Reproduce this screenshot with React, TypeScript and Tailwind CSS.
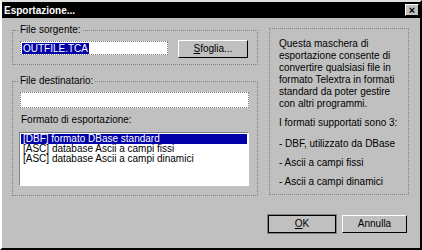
import React from "react";

const font = { fontFamily: '"Liberation Sans", Arial, sans-serif' };

function Group({ label, className, children }: { label?: string; className: string; children?: React.ReactNode }) {
  return (
    <div className={"relative border border-dotted border-[#808080] " + className}>
      {label && (
        <span className="absolute -top-[7px] left-[5px] bg-[#c0c0c0] px-[2px] leading-[12px]">{label}</span>
      )}
      {children}
    </div>
  );
}

export default function App() {
  return (
    <div className="w-[422px] h-[250px] bg-[#c0c0c0] text-[10px] text-black relative overflow-hidden border-l-2 border-t-2 border-l-white border-t-[#dfdfdf] border-b-2 border-b-black border-r-2 border-r-black" style={font}>
      <div className="h-[16px] bg-black flex items-center justify-between pl-[2px] pr-[1px]">
        <span className="text-white font-bold text-[10px]">Esportazione...</span>
        <div className="w-[14px] h-[12px] bg-[#c0c0c0] border border-t-white border-l-white border-r-black border-b-black flex items-center justify-center text-[11px] font-bold leading-none">×</div>
      </div>
      <div className="flex pl-[10px] gap-[11px]">
        <div className="flex flex-col w-[246px] pt-[12px]">
          <Group label="File sorgente:" className="h-[35px] pl-[7px] pt-[10px]">
            <div className="flex items-start gap-[10px]">
              <div className="w-[148px] h-[14px] bg-white border border-dotted border-[#808080] flex items-center pl-[1px]">
                <span className="bg-[#0000a8] text-white px-[1px] leading-[11px]">OUTFILE.TCA</span>
              </div>
              <button className="w-[70px] h-[18px] -mt-[1px] border border-t-white border-l-white border-r-black border-b-black bg-[#c0c0c0] leading-none"><u>S</u>foglia...</button>
            </div>
          </Group>
          <Group label="File destinatario:" className="mt-[16px] h-[115px] pl-[7px] pt-[10px]">
            <div className="w-[229px] h-[16px] bg-white border border-dotted border-[#808080]" />
            <div className="mt-[6px] ml-[1px] leading-[12px]">Formato di esportazione:</div>
            <div className="w-[230px] h-[54px] -ml-[1px] bg-white border border-t-[#808080] border-l-[#808080] border-r-white border-b-white mt-[6px] pt-[1px] pl-[1px]">
              <div className="bg-[#0000a8] text-white w-[226px] pl-[2px] h-[10px] leading-[10px]">[DBF] formato DBase standard</div>
              <div className="pl-[2px] h-[10px] leading-[10px]">[ASC] database Ascii a campi fissi</div>
              <div className="pl-[2px] h-[10px] leading-[10px]">[ASC] database Ascii a campi dinamici</div>
            </div>
          </Group>
        </div>
        <div className="flex flex-col pt-[10px]">
          <Group className="w-[140px] h-[167px] pl-[9px] pr-[2px] pt-[9px] leading-[12px]">
            <div>Questa maschera di esportazione consente di convertire qualsiasi file in formato Telextra in formati standard da poter gestire con altri programmi.</div>
            <div className="mt-[7px]">I formati supportati sono 3:</div>
            <div className="mt-[9px]">- DBF, utilizzato da DBase</div>
            <div className="mt-[7px]">- Ascii a campi fissi</div>
            <div className="mt-[7px]">- Ascii a campi dinamici</div>
          </Group>
          <div className="flex gap-[6px] mt-[20px] -ml-[1px]">
            <button className="w-[68px] h-[18px] border border-black outline outline-1 outline-[#808080] bg-[#c0c0c0] leading-none"><u>O</u>K</button>
            <button className="w-[65px] h-[18px] border border-t-white border-l-white border-r-black border-b-black bg-[#c0c0c0] leading-none">Annulla</button>
          </div>
        </div>
      </div>
    </div>
  );
}
